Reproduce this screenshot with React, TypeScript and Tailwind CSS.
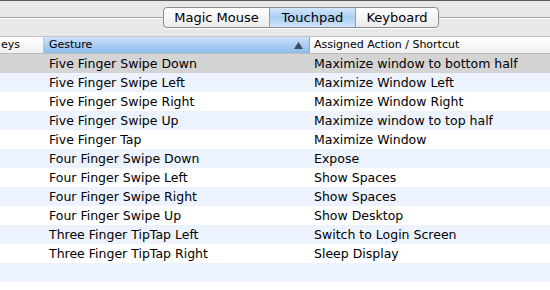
const rows: [string, string][] = [
  ['Five Finger Swipe Down', 'Maximize window to bottom half'],
  ['Five Finger Swipe Left', 'Maximize Window Left'],
  ['Five Finger Swipe Right', 'Maximize Window Right'],
  ['Five Finger Swipe Up', 'Maximize window to top half'],
  ['Five Finger Tap', 'Maximize Window'],
  ['Four Finger Swipe Down', 'Expose'],
  ['Four Finger Swipe Left', 'Show Spaces'],
  ['Four Finger Swipe Right', 'Show Spaces'],
  ['Four Finger Swipe Up', 'Show Desktop'],
  ['Three Finger TipTap Left', 'Switch to Login Screen'],
  ['Three Finger TipTap Right', 'Sleep Display'],
  ['', ''],
]

const tabs = ['Magic Mouse', 'Touchpad', 'Keyboard']

function SegmentedControl() {
  return (
    <div className="flex h-[21px] rounded-[4px] border border-[#8c8c8c] bg-gradient-to-b from-white to-[#ececec] shadow-[0_1px_0_rgba(255,255,255,0.8)] overflow-hidden">
      {tabs.map((tab, i) => (
        <div
          key={tab}
          className={`flex items-center justify-center text-[13px] text-black ${
            i > 0 ? 'border-l border-[#9a9a9a]' : ''
          } ${i === 0 ? 'w-[105px]' : i === 1 ? 'w-[86px]' : 'w-[83px]'} ${
            tab === 'Touchpad' ? 'bg-gradient-to-b from-[#d3e7fb] via-[#a9cff5] to-[#cfe5fb]' : ''
          }`}
        >
          {tab}
        </div>
      ))}
    </div>
  )
}

export default function App() {
  return (
    <div
      className="w-[550px] h-[290px] overflow-hidden bg-white"
      style={{ fontFamily: '"DejaVu Sans", "Liberation Sans", sans-serif' }}
    >
      {/* toolbar with device tabs */}
      <div className="h-[37px] bg-[#e8e8e8] border-t border-[#5a5a5a] border-b border-b-[#c4c4c4] flex items-center pb-[2px]">
        <div className="w-[163px] h-[2px] border-t border-[#a3a3a3] border-b border-b-white" />
        <SegmentedControl />
        <div className="flex-1 h-[2px] border-t border-[#a3a3a3] border-b border-b-white" />
      </div>

      {/* column header */}
      <div className="flex h-[17px] text-[11px] border-b border-[#bcbcbc] bg-gradient-to-b from-white to-[#f0f0f0]">
        <div className="w-[44px] border-r border-[#c4c4c4] flex items-center pl-[1px]">
          <span>eys</span>
        </div>
        <div className="w-[266px] border-r border-[#8fa8c8] flex items-center justify-between pl-[5px] pr-[6px] bg-gradient-to-b from-[#cfe4f9] via-[#a9cdf2] to-[#8fbdec]">
          <span>Gesture</span>
          <svg width="9" height="7" viewBox="0 0 9 7">
            <path d="M4.5 0L9 7H0z" fill="#3d4c63" />
          </svg>
        </div>
        <div className="flex-1 flex items-center pl-[4px]">Assigned Action / Shortcut</div>
      </div>

      {/* rows */}
      <div className="text-[12.5px] text-black">
        {rows.map(([gesture, action], i) => (
          <div
            key={i}
            className={`flex h-[19px] items-center pt-[2px] whitespace-nowrap ${
              i === 0 ? 'bg-[#d4d4d4]' : i % 2 === 1 ? 'bg-[#edf3fe]' : 'bg-white'
            }`}
          >
            <div className="w-[44px]" />
            <div className="w-[266px] pl-[5px]">{gesture}</div>
            <div className="flex-1 pl-[4px]">{action}</div>
          </div>
        ))}
      </div>
    </div>
  )
}
